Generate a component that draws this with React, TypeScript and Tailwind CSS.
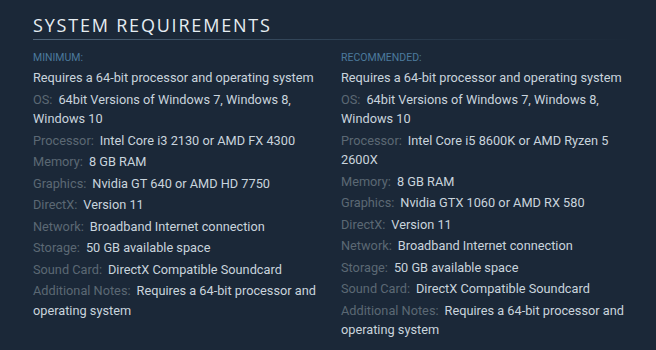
import React from "react";

type Row = { label?: string; value: string };

const minimum: Row[] = [
  { value: "Requires a 64-bit processor and operating system" },
  { label: "OS:", value: "64bit Versions of Windows 7, Windows 8, Windows 10" },
  { label: "Processor:", value: "Intel Core i3 2130 or AMD FX 4300" },
  { label: "Memory:", value: "8 GB RAM" },
  { label: "Graphics:", value: "Nvidia GT 640 or AMD HD 7750" },
  { label: "DirectX:", value: "Version 11" },
  { label: "Network:", value: "Broadband Internet connection" },
  { label: "Storage:", value: "50 GB available space" },
  { label: "Sound Card:", value: "DirectX Compatible Soundcard" },
  { label: "Additional Notes:", value: "Requires a 64-bit processor and operating system" },
];

const recommended: Row[] = [
  { value: "Requires a 64-bit processor and operating system" },
  { label: "OS:", value: "64bit Versions of Windows 7, Windows 8, Windows 10" },
  { label: "Processor:", value: "Intel Core i5 8600K or AMD Ryzen 5 2600X" },
  { label: "Memory:", value: "8 GB RAM" },
  { label: "Graphics:", value: "Nvidia GTX 1060 or AMD RX 580" },
  { label: "DirectX:", value: "Version 11" },
  { label: "Network:", value: "Broadband Internet connection" },
  { label: "Storage:", value: "50 GB available space" },
  { label: "Sound Card:", value: "DirectX Compatible Soundcard" },
  { label: "Additional Notes:", value: "Requires a 64-bit processor and operating system" },
];

function Column({ title, rows }: { title: string; rows: Row[] }) {
  return (
    <div className="w-[292px]">
      <div className="text-[10.5px] leading-[14px] uppercase text-[#4c7a9c] mb-[3px]">{title}</div>
      <ul>
        {rows.map((r, i) => (
          <li key={i} className="text-[12.75px] leading-[19.5px] mb-[2px] text-[#c9d4dd]">
            {r.label && <span className="text-[#5b6874] mr-[6px]">{r.label}</span>}
            {r.value}
          </li>
        ))}
      </ul>
    </div>
  );
}

export default function App() {
  return (
    <div
      className="w-[656px] h-[350px] bg-[#1b2838] pl-[33px] pt-[12px] overflow-hidden"
      style={{ fontFamily: 'Roboto, "Noto Sans", Arial, sans-serif' }}
    >
      <h2
        className="text-[18px] leading-[26px] tracking-[1.8px] uppercase text-[#e6edf2] font-normal"
        style={{ fontFamily: '"Open Sans", Arial, sans-serif' }}
      >
        System Requirements
      </h2>
      <div className="h-[1px] w-[600px] mt-[1px] bg-gradient-to-r from-[#52667a] via-[#2e4154] to-transparent" />
      <div className="flex gap-[16px] mt-[11px]">
        <Column title="Minimum:" rows={minimum} />
        <Column title="Recommended:" rows={recommended} />
      </div>
    </div>
  );
}
